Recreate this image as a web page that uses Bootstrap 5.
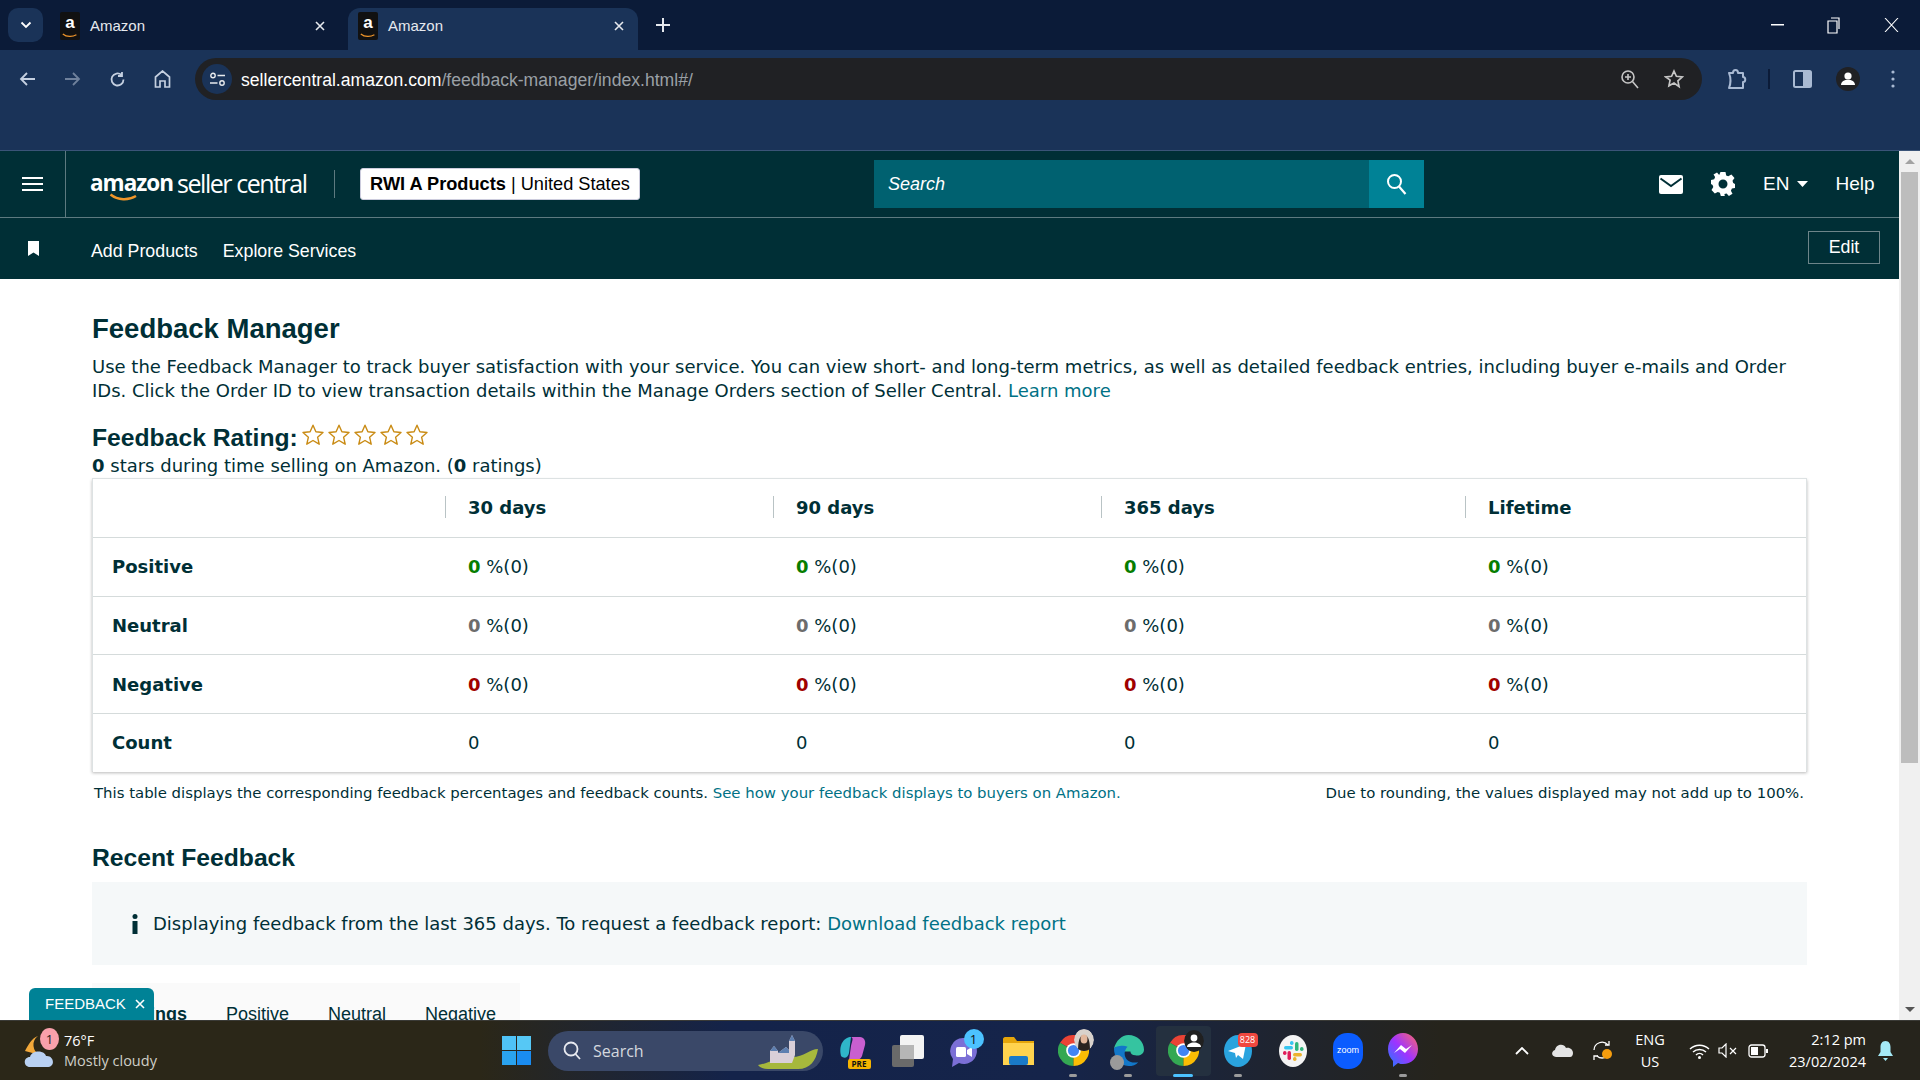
<!DOCTYPE html>
<html lang="en">
<head>
  <meta charset="UTF-8">
  <meta name="viewport" content="width=device-width, initial-scale=1.0">
  <title>Amazon</title>
  <link href="https://cdn.jsdelivr.net/npm/bootstrap@5.3.0/dist/css/bootstrap.min.css" rel="stylesheet">
  <style>
    html, body { height: 100%; }
    body { overflow: hidden; font-family: "Liberation Sans", Arial, sans-serif; color: #002f36; background: #fff; }
    svg { display: block; flex: none; }

    /* browser chrome */
    .tab-strip { height: 50px; background: #0b1b38; padding-left: 8px; color: #e6e9ee; font-size: 15px; }
    .tab-switch { width: 35px; height: 34px; margin-top: 8px; background: #1a3358; border-radius: 10px; }
    .tab-item { width: 290px; height: 42px; margin-top: 8px; padding: 0 13px 6px 10px; border-radius: 12px 12px 0 0; }
    .tab-first { margin-left: 7px; width: 298px; padding-right: 22px; }
    .tab-active { background: #1a3358; }
    .tab-new { padding-left: 18px; }
    .fav-icon { width: 20px; height: 28px; margin-right: 10px; background: #111; color: #fff; font: bold 17px/22px "Liberation Sans", sans-serif; text-align: center; border-radius: 2px; position: relative; }
    .fav-icon svg { position: absolute; left: 2px; bottom: 2px; }
    .win-btns { margin-left: auto; width: 149px; padding-right: 21px; }
    .tool-bar { height: 101px; background: #1a3358; border-bottom: 1px solid #3a5478; padding-top: 8px; }
    .tool-row { height: 42px; }
    .tool-nav { width: 195px; padding-left: 19px; gap: 28px; }
    .omni-box { width: 1507px; height: 42px; background: #202124; border-radius: 21px; color: #fff; font-size: 17.6px; padding: 0 18px 0 7px; }
    .omni-site { width: 30px; height: 30px; background: #1a3358; border-radius: 50%; margin-right: 9px; }
    .omni-url { padding-top: 2px; }
    .omni-path { color: #9aa0a6; }
    .tool-right { padding-left: 24px; }
    .tool-sep { margin: 0 23px 0 21px; }
    .tool-face { margin-left: 24px; }
    .tool-dots { margin-left: 31px; }

    /* seller central header */
    .sc-top { height: 67px; background: #002f36; border-bottom: 1px solid #5d7a80; color: #fff; }
    .sc-burger { width: 66px; height: 66px; border-right: 1px solid #5d7a80; }
    .sc-logo { width: 268px; height: 66px; padding-left: 24px; padding-bottom: 2px; }
    .logo-amazon { font: bold 22.5px/1 "Open Sans", "Liberation Sans", sans-serif; letter-spacing: -1px; position: relative; }
    .logo-amazon svg { position: absolute; left: 12px; top: 21px; }
    .logo-seller { font: 400 25px/1 "Open Sans", "Liberation Sans", sans-serif; letter-spacing: -1.45px; margin-left: 4px; }
    .sc-sep { width: 1px; height: 28px; background: #5d7a80; margin-right: 25px; }
    .sc-account { width: 280px; height: 32px; padding-top: 1px; background: #fff; border: 1px solid #ccd; border-radius: 3px; color: #000; font-size: 18.2px; }
    .sc-search { width: 550px; height: 48px; margin-left: 234px; background: #006170; font-style: italic; font-size: 18px; padding-left: 14px; color: #fff; }
    .sc-search-btn { width: 55px; height: 48px; background: #008296; margin-left: auto; }
    .sc-tools { margin-left: 235px; font-size: 19px; gap: 28px; }
    .sc-tool-help { margin-left: -1px; }
    .sc-sub { height: 61px; background: #002f36; color: #fff; font-size: 17.8px; padding-right: 19px; }
    .sc-bookmark { width: 66px; padding-bottom: 1px; }
    .sc-sublinks { gap: 25px; padding-top: 5px; padding-left: 25px; }
    .sc-edit { width: 72px; height: 33px; border: 1px solid #6d858a; margin: -3px 0 0 auto; }
    .page-wrap { min-height: 0; position: relative; }
    .page-main { padding: 0 0 0 92px; min-width: 0; }
    .page-bar { width: 21px; background: #f0f0f0; position: relative; }
    .bar-thumb { position: absolute; left: 2px; right: 2px; top: 21px; height: 591px; background: #bdbdbd; }

    /* page body */
    .head-big { font-size: 27.5px; font-weight: 700; margin: 0; line-height: 32px; }
    .head-mid { font-size: 24.7px; font-weight: 700; margin: 0; line-height: 30px; }
    .body-txt { font-family: "DejaVu Sans", Verdana, sans-serif; font-size: 18px; line-height: 24px; }
    .page-intro { width: 1715px; margin: 10px 0 0; }
    .head-first { padding-top: 34px; }
    .rate-line { margin-top: 19px; height: 32px; }
    .rate-stars { gap: 2px; margin: -6px 0 0 3px; }
    .rate-sub { line-height: 24px; }
    .stat-box { width: 1715px; border: 1px solid #dde2e3; box-shadow: 0 2px 3px rgba(0,0,0,.28); height: 293px; }
    .stat-table { table-layout: fixed; width: 100%; margin: 0; font-family: "DejaVu Sans", Verdana, sans-serif; font-size: 18px; color: #002f36; }
    .stat-table th, .stat-table td { height: 58.6px; padding: 0 0 0 21px; vertical-align: middle; border-bottom: 1px solid #d5dbdb; position: relative; background: #fff; color: #002f36; }
    .stat-table th { padding-bottom: 2px; }
    .stat-table tr:last-child td { border-bottom: 0; }
    .stat-table td:first-child { padding-left: 19px; font-weight: 700; }
    .stat-table thead th + th::before { content: ""; position: absolute; left: -2px; top: 17px; height: 22px; width: 1px; background: #b9c3c5; }
    .col-label { width: 354px; }
    .col-short { width: 328px; }
    .col-year { width: 364px; }
    .val-pos { color: #067d00; font-weight: 700; }
    .val-neu { color: #6c6c6c; font-weight: 700; }
    .val-neg { color: #a00000; font-weight: 700; }
    .stat-note { width: 1715px; font-family: "DejaVu Sans", Verdana, sans-serif; font-size: 14.9px; line-height: 20px; padding: 12px 3px 0 2px; }
    .txt-link { color: #007185; text-decoration: none; }
    .head-recent { margin-top: 40px; }
    .info-box { width: 1715px; height: 83px; margin-top: 9px; padding-top: 1px; background: #f5f8f9; padding-left: 35px; }
    .info-mark { width: 15px; margin-right: 11px; }
    .tab-band { width: 428px; height: 60px; margin-top: 18px; background: #fafafa; font-size: 18px; padding-top: 18px; padding-left: 7px; gap: 39px; }
    .feedback-tab { position: absolute; left: 29px; bottom: 0; width: 125px; height: 32px; background: #008296; color: #fff; font-size: 15px; border-radius: 6px 6px 0 0; padding-left: 16px; }

    /* taskbar */
    .task-bar { height: 60px; background: linear-gradient(90deg, #2b2718 0, #2b2718 25%, #14234a 38%, #15244a 55%, #26241c 75%, #26241c 100%); border-top: 1px solid #3a3a36; color: #fff; font-family: "Open Sans", "Liberation Sans", sans-serif; position: relative; }
    .task-weather { width: 502px; padding-left: 24px; font-size: 14.5px; line-height: 20px; }
    .weather-icon { width: 40px; height: 44px; position: relative; }
    .weather-badge { position: absolute; left: 16px; top: -1px; width: 19px; height: 22px; border-radius: 50%; background: #f9a0ab; color: #222; font-size: 13px; line-height: 22px; text-align: center; }
    .weather-sub { color: #cfcfc8; }
    .task-win { width: 46px; }
    .task-search { width: 275px; height: 40px; border-radius: 20px; background: #3a4868; color: #d4d8df; font-size: 16px; padding-left: 15px; gap: 12px; position: relative; }
    .task-scene { position: absolute; right: 3px; top: 2px; }
    .task-apps { margin-left: 2.5px; }
    .task-app { width: 55px; height: 50px; position: relative; }
    .task-app-on { background: #24303f; border-radius: 4px; }
    .task-dot { position: absolute; left: 50%; bottom: -1px; width: 8px; height: 3px; margin-left: -4px; border-radius: 2px; background: #9b9b9b; }
    .task-app-on .task-dot { width: 20px; margin-left: -10px; background: #4cc2ff; }
    .task-pip { position: absolute; border-radius: 50%; font-size: 13px; line-height: 20px; text-align: center; color: #111; }
    .pip-teams { left: 28px; top: 3px; width: 20px; height: 20px; background: #4cc2ff; }
    .pip-tele { left: 27px; top: 7px; height: 14px; width: 20px; background: #f0473f; border-radius: 4px; color: #fff; font-size: 9px; line-height: 14px; }
    .pip-pre { left: 22px; top: 33px; height: 10px; width: 23px; background: #f5b400; border-radius: 2px; color: #111; font-size: 8px; font-weight: 700; line-height: 10px; }
    .pip-face { left: 28px; top: 3px; }
    .pip-user { left: 28px; top: 4px; }
    .pip-grey { left: 9px; bottom: 6px; width: 14px; height: 15px; background: #9a9a9a; }
    .task-tray { position: absolute; left: 1502px; top: 0; right: 0; height: 59px; font-size: 14.5px; line-height: 22px; }
    .tray-item { width: 40px; }
    .tray-lang { width: 48px; text-align: center; margin: 0 3px 0 4px; }
    .tray-net { margin-left: 12px; }
    .tray-time { width: 92px; text-align: right; white-space: nowrap; margin-left: 6px; }
    .tray-bell { margin-left: 11px; }
    .tray-batt { margin-left: 2px; }
  </style>
</head>
<body class="d-flex flex-column">
  <svg width="0" height="0" class="position-absolute">
    <defs>
      <symbol id="ic-smile" viewBox="0 0 20 6"><path d="M1 1c5 4 12 4 17 1" fill="none" stroke="#f0962a" stroke-width="1.600"/></symbol>
      <symbol id="ic-close" viewBox="0 0 12 12"><path d="M2 2l8 8M10 2l-8 8" stroke="currentColor" stroke-width="1.600" fill="none"/></symbol>
      <symbol id="ic-star" viewBox="0 0 24 24"><path d="M12 2.200l2.900 6.600 7.100.7-5.400 4.700 1.600 7-6.200-3.700-6.200 3.700 1.600-7L2 9.500l7.100-.7z" fill="#fff" stroke="#c98b14" stroke-width="1.400" stroke-linejoin="round"/></symbol>
      <symbol id="ic-chrome" viewBox="0 0 36 36">
        <path d="M18 18L33.600 9A18 18 0 0 0 2.400 9z" fill="#ea4335"/>
        <path d="M18 18L2.400 9A18 18 0 0 0 18 36z" fill="#34a853"/>
        <path d="M18 18l0 18A18 18 0 0 0 33.600 9z" fill="#fbbc04"/>
        <circle cx="18" cy="18" r="8.500" fill="#fff"/><circle cx="18" cy="18" r="6.500" fill="#4285f4"/>
      </symbol>
    </defs>
  </svg>

  <div class="tab-strip d-flex flex-shrink-0">
    <div class="tab-switch d-flex align-items-center justify-content-center">
      <svg width="12" height="8" viewBox="0 0 12 8"><path d="M1.500 1.500L6 6l4.500-4.500" stroke="#fff" stroke-width="1.800" fill="none"/></svg>
    </div>
    <div class="tab-item tab-first d-flex align-items-center">
      <span class="fav-icon">a<svg width="16" height="5"><use href="#ic-smile"/></svg></span>
      <span>Amazon</span>
      <svg class="ms-auto" width="12" height="12"><use href="#ic-close"/></svg>
    </div>
    <div class="tab-item tab-active d-flex align-items-center">
      <span class="fav-icon">a<svg width="16" height="5"><use href="#ic-smile"/></svg></span>
      <span>Amazon</span>
      <svg class="ms-auto" width="12" height="12"><use href="#ic-close"/></svg>
    </div>
    <div class="tab-new d-flex align-items-center">
      <svg width="14" height="14" viewBox="0 0 14 14"><path d="M7 0v14M0 7h14" stroke="#e6e9ee" stroke-width="2"/></svg>
    </div>
    <div class="win-btns d-flex align-items-center justify-content-between">
      <svg width="13" height="2"><rect width="13" height="1.500" fill="#fff"/></svg>
      <svg width="14" height="18" viewBox="0 0 14 18"><path d="M1 5h9v12H1zM4 2h8v11" fill="none" stroke="#fff" stroke-width="1.200"/></svg>
      <svg width="15" height="14" viewBox="0 0 15 14"><path d="M1 0l13 14M14 0L1 14" stroke="#fff" stroke-width="1.100"/></svg>
    </div>
  </div>

  <div class="tool-bar flex-shrink-0">
    <div class="tool-row d-flex align-items-center">
      <div class="tool-nav d-flex align-items-center">
        <svg width="17" height="16" viewBox="0 0 17 16"><path d="M16 8H2M8 2L2 8l6 6" fill="none" stroke="#c5d0e0" stroke-width="1.800"/></svg>
        <svg width="17" height="16" viewBox="0 0 17 16"><path d="M1 8h14M9 2l6 6-6 6" fill="none" stroke="#6f819c" stroke-width="1.800"/></svg>
        <svg width="17" height="17" viewBox="0 0 17 17"><path d="M14.500 8.500a6 6 0 1 1-2-4.500M13 1v4H9" fill="none" stroke="#c5d0e0" stroke-width="1.800"/></svg>
        <svg width="17" height="18" viewBox="0 0 17 18"><path d="M1.500 17V7l7-6 7 6v10h-4.500v-6h-5v6z" fill="none" stroke="#c5d0e0" stroke-width="1.700"/></svg>
      </div>
      <div class="omni-box d-flex align-items-center">
        <span class="omni-site d-flex align-items-center justify-content-center">
          <svg width="17" height="15" viewBox="0 0 17 15"><circle cx="4" cy="3.500" r="2.200" fill="none" stroke="#e8eaed" stroke-width="1.400"/><path d="M8.500 3.500H16M1 11h7.500" stroke="#e8eaed" stroke-width="1.400"/><circle cx="13" cy="11" r="2.200" fill="none" stroke="#e8eaed" stroke-width="1.400"/></svg>
        </span>
        <span class="omni-url">sellercentral.amazon.com<span class="omni-path">/feedback-manager/index.html#/</span></span>
        <span class="ms-auto d-flex align-items-center gap-4">
          <svg width="20" height="20" viewBox="0 0 20 20"><circle cx="8" cy="8" r="6" fill="none" stroke="#c6c6c6" stroke-width="1.600"/><path d="M12.500 12.500L18 19M5 8h6M8 5v6" stroke="#c6c6c6" stroke-width="1.600"/></svg>
          <svg width="20" height="20" viewBox="0 0 24 24"><path d="M12 2.500l2.900 6.300 6.900.8-5.100 4.700 1.400 6.900L12 16.800l-6.100 3.400 1.400-6.900L2.200 9.600l6.900-.8z" fill="none" stroke="#c6c6c6" stroke-width="2"/></svg>
        </span>
      </div>
      <div class="tool-right d-flex align-items-center">
        <svg width="21" height="21" viewBox="0 0 21 21"><path d="M3 4h4c0-4 5-4 5 0h5v4c3 0 3 5 0 5v6H3c2-5 2-10 0-15z" fill="none" stroke="#a9bad3" stroke-width="2" stroke-linejoin="round"/></svg>
        <span class="tool-sep"><svg width="2" height="20"><rect width="2" height="20" fill="#0b1b38"/></svg></span>
        <svg width="19" height="18" viewBox="0 0 19 18"><rect x="1" y="1" width="17" height="16" rx="1.500" fill="none" stroke="#a9bad3" stroke-width="2"/><rect x="10" y="1" width="8" height="16" fill="#a9bad3"/></svg>
        <svg class="tool-face" width="24" height="24" viewBox="0 0 24 24"><circle cx="12" cy="12" r="12" fill="#202124"/><circle cx="12" cy="9" r="3.600" fill="#fff"/><path d="M5 18c0-7 14-7 14 0z" fill="#fff"/></svg>
        <svg class="tool-dots" width="4" height="18" viewBox="0 0 4 18"><circle cx="2" cy="2" r="1.600" fill="#a9bad3"/><circle cx="2" cy="9" r="1.600" fill="#a9bad3"/><circle cx="2" cy="16" r="1.600" fill="#a9bad3"/></svg>
      </div>
    </div>
  </div>

  <div class="page-wrap flex-grow-1 d-flex overflow-hidden">
    <div class="flex-grow-1 d-flex flex-column overflow-hidden">
      <header class="sc-top d-flex align-items-center flex-shrink-0">
        <div class="sc-burger d-flex align-items-center justify-content-center">
          <svg width="21" height="14" viewBox="0 0 21 14"><path d="M0 1h21M0 7h21M0 13h21" stroke="#fff" stroke-width="2"/></svg>
        </div>
        <div class="sc-logo d-flex align-items-center">
          <span class="logo-amazon">amazon<svg width="44" height="9" viewBox="0 0 20 6"><use href="#ic-smile"/></svg></span>
          <span class="logo-seller">seller central</span>
        </div>
        <div class="sc-sep"></div>
        <div class="sc-account d-flex align-items-center justify-content-center"><b>RWI A Products</b>&nbsp;|&nbsp;United States</div>
        <div class="sc-search d-flex align-items-center">
          <span>Search</span>
          <span class="sc-search-btn d-flex align-items-center justify-content-center">
            <svg width="21" height="22" viewBox="0 0 21 22"><circle cx="8.500" cy="8.500" r="6.500" fill="none" stroke="#fff" stroke-width="2"/><path d="M13 13.500l6.500 7.500" stroke="#fff" stroke-width="2.200"/></svg>
          </span>
        </div>
        <div class="sc-tools d-flex align-items-center">
          <svg width="24" height="19" viewBox="0 0 24 19"><rect width="24" height="19" rx="2" fill="#fff"/><path d="M1.500 3.500L12 11 22.500 3.500" fill="none" stroke="#002f36" stroke-width="2"/></svg>
          <svg width="24" height="24" viewBox="0 0 24 24"><path fill="#fff" fill-rule="evenodd" d="M9.500 0h5l.7 3.400 2 .9L20.400 2.500 23.500 6l-2 2.800.7 2.200 1.800 1v4l-3.100.6-1 2.100 1.600 3-3.600 2.300-2.300-2.500-2.200.4L13.800 24h-4l-.9-3.300-2.100-.8-3 1.700L.5 18l1.800-2.900-.7-2.100L0 12V8l3.200-.8.900-2.100L2.500 2.500 6 .5l2.200 2.500zM12 7.500a4.500 4.500 0 1 0 0 9 4.500 4.500 0 0 0 0-9z"/></svg>
          <span class="d-flex align-items-center">EN<svg class="ms-2" width="11" height="6" viewBox="0 0 11 6"><path d="M0 0h11L5.500 6z" fill="#fff"/></svg></span>
          <span class="sc-tool-help">Help</span>
        </div>
      </header>
      <div class="sc-sub d-flex align-items-center flex-shrink-0">
        <div class="sc-bookmark d-flex justify-content-center">
          <svg width="11" height="15" viewBox="0 0 11 15"><path d="M0 0h11v15L5.500 11.500 0 15z" fill="#fff"/></svg>
        </div>
        <div class="sc-sublinks d-flex"><span>Add Products</span><span>Explore Services</span></div>
        <div class="sc-edit d-flex align-items-center justify-content-center">Edit</div>
      </div>
      <main class="page-main flex-grow-1 overflow-hidden">
        <div class="head-first"><h1 class="head-big">Feedback Manager</h1></div>
        <p class="page-intro body-txt">Use the Feedback Manager to track buyer satisfaction with your service. You can view short- and long-term metrics, as well as detailed feedback entries, including buyer e-mails and Order IDs. Click the Order ID to view transaction details within the Manage Orders section of Seller Central. <a class="txt-link" href="#">Learn more</a></p>
        <div class="rate-line d-flex align-items-center">
          <h2 class="head-mid">Feedback Rating:</h2>
          <div class="rate-stars d-flex">
            <svg width="24" height="24"><use href="#ic-star"/></svg><svg width="24" height="24"><use href="#ic-star"/></svg><svg width="24" height="24"><use href="#ic-star"/></svg><svg width="24" height="24"><use href="#ic-star"/></svg><svg width="24" height="24"><use href="#ic-star"/></svg>
          </div>
        </div>
        <div class="rate-sub body-txt"><b>0</b> stars during time selling on Amazon. (<b>0</b> ratings)</div>
        <div class="stat-box">
          <table class="table stat-table">
            <colgroup><col class="col-label"><col class="col-short"><col class="col-short"><col class="col-year"><col></colgroup>
            <thead><tr><th></th><th>30 days</th><th>90 days</th><th>365 days</th><th>Lifetime</th></tr></thead>
            <tbody>
              <tr><td>Positive</td><td><span class="val-pos">0</span> %(0)</td><td><span class="val-pos">0</span> %(0)</td><td><span class="val-pos">0</span> %(0)</td><td><span class="val-pos">0</span> %(0)</td></tr>
              <tr><td>Neutral</td><td><span class="val-neu">0</span> %(0)</td><td><span class="val-neu">0</span> %(0)</td><td><span class="val-neu">0</span> %(0)</td><td><span class="val-neu">0</span> %(0)</td></tr>
              <tr><td>Negative</td><td><span class="val-neg">0</span> %(0)</td><td><span class="val-neg">0</span> %(0)</td><td><span class="val-neg">0</span> %(0)</td><td><span class="val-neg">0</span> %(0)</td></tr>
              <tr><td>Count</td><td>0</td><td>0</td><td>0</td><td>0</td></tr>
            </tbody>
          </table>
        </div>
        <div class="stat-note d-flex justify-content-between">
          <span>This table displays the corresponding feedback percentages and feedback counts. <a class="txt-link" href="#">See how your feedback displays to buyers on Amazon.</a></span>
          <span>Due to rounding, the values displayed may not add up to 100%.</span>
        </div>
        <h2 class="head-mid head-recent">Recent Feedback</h2>
        <div class="info-box body-txt d-flex align-items-center">
          <span class="info-mark d-flex justify-content-center"><svg width="6" height="20" viewBox="0 0 6 20"><circle cx="3" cy="2.500" r="2.500" fill="#002f36"/><rect x=".5" y="7" width="5" height="13" fill="#002f36"/></svg></span>
          <span>Displaying feedback from the last 365 days. To request a feedback report: <a class="txt-link" href="#">Download feedback report</a></span>
        </div>
        <div class="tab-band d-flex">
          <b>All ratings</b><span>Positive</span><span>Neutral</span><span>Negative</span>
        </div>
      </main>
    </div>
    <div class="page-bar flex-shrink-0">
      <svg class="position-absolute top-0 start-50 translate-middle-x mt-2" width="10" height="5"><path d="M0 5L5 0l5 5z" fill="#a3a3a3"/></svg>
      <div class="bar-thumb"></div>
      <svg class="position-absolute bottom-0 start-50 translate-middle-x mb-2" width="10" height="5"><path d="M0 0l5 5 5-5z" fill="#555"/></svg>
    </div>
    <div class="feedback-tab d-flex align-items-center">FEEDBACK<svg class="ms-2" width="12" height="12"><use href="#ic-close"/></svg></div>
  </div>

  <footer class="task-bar d-flex align-items-center flex-shrink-0">
    <div class="task-weather d-flex align-items-center">
      <div class="weather-icon">
        <svg width="32" height="42" viewBox="0 0 32 42"><path d="M14 7a11 11 0 0 0 2 19l-15-4C4 16 8 9 14 7z" fill="#f2a83a"/><path d="M6 38c-7 0-7-10 0-10 2-7 14-7 16-1 8-1 10 11 1 11z" fill="#b9d1f2"/></svg>
        <span class="weather-badge">1</span>
      </div>
      <div><div>76°F</div><div class="weather-sub">Mostly cloudy</div></div>
    </div>
    <div class="task-win">
      <svg width="29" height="29" viewBox="0 0 29 29"><path d="M0 0h14v14H0z" fill="#4fc3f7"/><path d="M15 0h14v14H15z" fill="#56c8f5"/><path d="M0 15h14v14H0z" fill="#2aa3ef"/><path d="M15 15h14v14H15z" fill="#1a8cf0"/></svg>
    </div>
    <div class="task-search d-flex align-items-center">
      <svg width="18" height="19" viewBox="0 0 18 19"><circle cx="8" cy="8" r="6.500" fill="none" stroke="#e8eaf0" stroke-width="1.800"/><path d="M12.500 13l4.500 5" stroke="#e8eaf0" stroke-width="1.800"/></svg>
      <span>Search</span>
      <svg class="task-scene" width="64" height="36" viewBox="0 0 64 36"><path d="M2 32c12-2 18-8 34-8 12 0 18-8 26-8-2 12-8 20-20 20H12C8 36 4 35 2 32z" fill="#a6b83c"/><path d="M14 30V18l4-5 4 5v12zM22 30V20l8-6 3 3V8l3-6 3 6v14l-3 8z" fill="#d9cfd8"/><path d="M14 18l4-5 4 5zM33 8l3-6 3 6zM22 20l8-6 3 3v3z" fill="#5d7fb0"/></svg>
    </div>
    <div class="task-apps d-flex align-items-center">
      <div class="task-app d-flex align-items-center justify-content-center">
        <svg width="30" height="34" viewBox="0 0 30 34"><path d="M3 22C0 10 7 3 13 3l-2 16c-1 5-5 6-8 3z" fill="#2fb6c9"/><path d="M13 3h9c4 0 6 4 5 8L24 22c-1 3-4 4-7 4h-6l2-14c1-5 3-8 0-9z" fill="#c95fd0"/></svg>
        <span class="task-pip pip-pre">PRE</span>
      </div>
      <div class="task-app d-flex align-items-center justify-content-center">
        <svg width="32" height="32" viewBox="0 0 32 32"><rect x="0" y="10" width="22" height="22" rx="2" fill="#6a6a6a"/><rect x="8" y="0" width="24" height="24" rx="2" fill="#f3f3f3"/><rect x="8" y="10" width="14" height="14" fill="#b6b6b6"/></svg>
      </div>
      <div class="task-app d-flex align-items-center justify-content-center">
        <svg width="28" height="34" viewBox="0 0 28 34"><path d="M14 4a13 13 0 1 1-4 25l-7 4 1-8A13 13 0 0 1 14 4z" fill="#7b6fd6"/><rect x="7" y="13" width="10" height="10" rx="1.500" fill="#fff"/><path d="M18 16l5-3v10l-5-3z" fill="#fff"/></svg>
        <span class="task-pip pip-teams">1</span>
      </div>
      <div class="task-app d-flex align-items-center justify-content-center">
        <svg width="31" height="28" viewBox="0 0 31 28"><path d="M0 2c0-1 1-2 2-2h9l3 4h17v24H0z" fill="#e5a50a"/><path d="M0 6h31v22H0z" fill="#ffd34e"/><rect x="6" y="19" width="19" height="9" rx="2" fill="#1a7ac8"/></svg>
      </div>
      <div class="task-app d-flex align-items-center justify-content-center">
        <svg width="31" height="31"><use href="#ic-chrome"/></svg>
        <svg class="task-pip pip-face" width="20" height="22" viewBox="0 0 20 22"><ellipse cx="10" cy="11" rx="10" ry="11" fill="#d8d2cc"/><path d="M4 22c0-8 1-16 6-16s6 8 6 16z" fill="#2a2320"/><ellipse cx="10" cy="10" rx="3.500" ry="4.500" fill="#e2b79c"/></svg>
        <span class="task-dot"></span>
      </div>
      <div class="task-app d-flex align-items-center justify-content-center">
        <svg width="31" height="31" viewBox="0 0 32 32"><path d="M16 0c9 0 16 7 16 15 0 5-5 7-9 6-3 0-5-2-5-4H7C7 9 1 14 1 14 3 6 9 0 16 0z" fill="#35c4a0"/><path d="M1 14c0 9 6 18 15 18 4 0 8-1 10-4-7 2-14-2-14-9 0-2 1-5 3-7-5-2-13 0-14 2z" fill="#1277c9"/></svg><span class="task-pip pip-grey"></span><span class="task-dot"></span>
      </div>
      <div class="task-app task-app-on d-flex align-items-center justify-content-center">
        <svg width="31" height="31"><use href="#ic-chrome"/></svg>
        <svg class="task-pip pip-user" width="20" height="22" viewBox="0 0 20 22"><ellipse cx="10" cy="11" rx="10" ry="11" fill="#202020"/><circle cx="10" cy="8" r="3.400" fill="#fff"/><path d="M3 17c0-6 14-6 14 0z" fill="#fff"/></svg>
        <span class="task-dot"></span>
      </div>
      <div class="task-app d-flex align-items-center justify-content-center">
        <svg width="28" height="32" viewBox="0 0 28 32"><ellipse cx="14" cy="16" rx="14" ry="16" fill="#2aa3de"/><path d="M4 16l18-7-3 15-5-4-2 3-1-5z" fill="#fff"/></svg><span class="task-pip pip-tele">828</span><span class="task-dot"></span>
      </div>
      <div class="task-app d-flex align-items-center justify-content-center">
        <svg width="28" height="32" viewBox="0 0 28 32"><ellipse cx="14" cy="16" rx="14" ry="16" fill="#f4f4f4"/><rect x="5" y="11" width="9" height="3.500" rx="1.700" fill="#36c5f0"/><rect x="11" y="6" width="3.500" height="4" rx="1.700" fill="#36c5f0"/><rect x="16" y="7" width="3.500" height="9" rx="1.700" fill="#2eb67d"/><rect x="21" y="12" width="3.500" height="4" rx="1.700" fill="#2eb67d"/><rect x="14" y="18" width="9" height="3.500" rx="1.700" fill="#ecb22e"/><rect x="14" y="22" width="3.500" height="4" rx="1.700" fill="#ecb22e"/><rect x="8.500" y="16" width="3.500" height="9" rx="1.700" fill="#e01e5a"/><rect x="4" y="16" width="3.500" height="4" rx="1.700" fill="#e01e5a"/></svg>
      </div>
      <div class="task-app d-flex align-items-center justify-content-center">
        <svg width="30" height="36" viewBox="0 0 30 36"><rect width="30" height="36" rx="14" fill="#0b5cff"/><text x="15" y="20" font-family="Liberation Sans, sans-serif" font-size="9" fill="#fff" text-anchor="middle">zoom</text></svg>
      </div>
      <div class="task-app d-flex align-items-center justify-content-center">
        <svg width="30" height="36" viewBox="0 0 30 36"><defs><linearGradient id="msg-grad" x1="0" y1="1" x2="1" y2="0"><stop offset="0" stop-color="#1f7cff"/><stop offset=".5" stop-color="#a033ff"/><stop offset="1" stop-color="#ff6968"/></linearGradient></defs><path d="M15 0c8 0 15 7 15 16s-7 15-15 15c-2 0-3 0-5-1l-5 4v-6C2 25 0 21 0 16 0 7 7 0 15 0z" fill="url(#msg-grad)"/><path d="M6 20l7-8 5 4 6-4-7 8-5-4z" fill="#fff"/></svg><span class="task-dot"></span>
      </div>
    </div>
    <div class="task-tray d-flex align-items-center">
      <div class="tray-item d-flex justify-content-center"><svg width="14" height="8" viewBox="0 0 14 8"><path d="M1 7l6-6 6 6" fill="none" stroke="#fff" stroke-width="1.800"/></svg></div>
      <div class="tray-item d-flex justify-content-center"><svg width="21" height="13" viewBox="0 0 21 13"><path d="M4 13c-5 0-5-6-1-7 1-6 9-7 11-2 4-1 7 2 7 5 0 2-1 4-3 4z" fill="#e4e4e4"/></svg></div>
      <div class="tray-item d-flex justify-content-center"><svg width="21" height="21" viewBox="0 0 21 21"><path d="M2 10a8 8 0 0 1 14-5M18 12a8 8 0 0 1-13 4" fill="none" stroke="#fff" stroke-width="1.300"/><path d="M17 1v4h-4M2 20v-4h4" fill="none" stroke="#fff" stroke-width="1.300"/><circle cx="15" cy="14" r="5" fill="#f59d0e"/></svg></div>
      <div class="tray-lang"><div>ENG</div><div>US</div></div>
      <div class="tray-net d-flex align-items-center gap-2">
        <svg width="21" height="16" viewBox="0 0 21 16"><path d="M1 6a14 14 0 0 1 19 0M4 9a9.500 9.500 0 0 1 13 0M7 12a5 5 0 0 1 7 0" fill="none" stroke="#fff" stroke-width="1.500"/><circle cx="10.500" cy="14.500" r="1.500" fill="#fff"/></svg>
        <svg width="20" height="15" viewBox="0 0 20 15"><path d="M1 5h3l4-4v13l-4-4H1z" fill="none" stroke="#fff" stroke-width="1.200"/><path d="M12 5l6 6M18 5l-6 6" stroke="#fff" stroke-width="1.200"/></svg>
        <svg class="tray-batt" width="20" height="14" viewBox="0 0 20 14"><rect x="1" y="1" width="16" height="12" rx="2.500" fill="none" stroke="#fff" stroke-width="1.300"/><rect x="3" y="3" width="7" height="8" fill="#fff"/><rect x="18" y="5" width="2" height="4" fill="#fff"/></svg>
      </div>
      <div class="tray-time"><div>2:12 pm</div><div>23/02/2024</div></div>
      <svg class="tray-bell" width="17" height="20" viewBox="0 0 17 20"><path d="M8.500 0C5 0 3.500 3 3.500 6v5L1 15h15l-2.500-4V6c0-3-1.500-6-5-6z" fill="#a5eaf7"/><path d="M6 17h5l-2.500 3z" fill="#a5eaf7"/></svg>
    </div>
  </footer>
</body>
</html>
